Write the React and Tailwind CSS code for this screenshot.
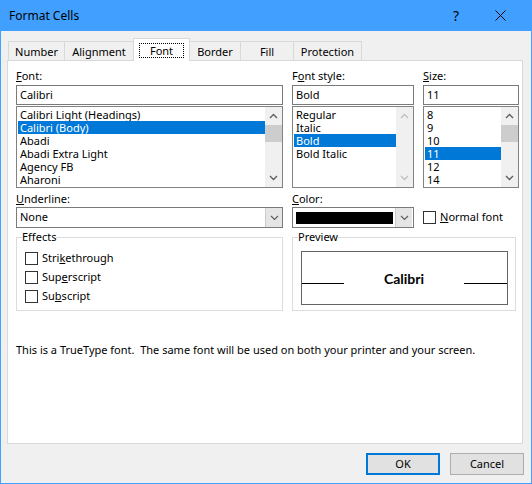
import { useState } from "react";

const tabs = [
  { name: "Number", w: "w-[57px]" },
  { name: "Alignment", w: "w-[70px]" },
  { name: "Font", w: "w-[57px]" },
  { name: "Border", w: "w-[52px]" },
  { name: "Fill", w: "w-[54px]" },
  { name: "Protection", w: "w-[69px]" },
];

const fonts = ["Calibri Light (Headings)", "Calibri (Body)", "Abadi", "Abadi Extra Light", "Agency FB", "Aharoni"];
const styles = ["Regular", "Italic", "Bold", "Bold Italic"];
const sizes = ["8", "9", "10", "11", "12", "14"];

function Chevron({ up, disabled }) {
  return (
    <svg width="9" height="6" viewBox="0 0 9 6" className="block">
      <path
        d={up ? "M1 5 L4.5 1.5 L8 5" : "M1 1 L4.5 4.5 L8 1"}
        fill="none"
        stroke={disabled ? "#c0c0c0" : "#606060"}
        strokeWidth="1.4"
      />
    </svg>
  );
}

function ListBox({ items, selected, width, disabled }) {
  return (
    <div className={`${width} h-[82px] mt-[1px] border border-[#828282] bg-white flex`}>
      <div className="flex-1 flex flex-col pt-[1px] pl-[1px]">
        {items.map((it) => (
          <div
            key={it}
            className={`h-[13px] leading-[13px] pl-[2px] whitespace-nowrap ${
              it === selected ? "bg-[#0078d7] text-white" : ""
            }`}
          >
            {it}
          </div>
        ))}
      </div>
      <div className="w-[17px] bg-[#f0f0f0] flex flex-col items-center justify-between py-[6px]">
        <Chevron up disabled={disabled} />
        <div className="flex-1 w-full">
          {!disabled && <div className="mt-[6px] h-[17px] w-full bg-[#cdcdcd]" />}
        </div>
        <Chevron disabled={disabled} />
      </div>
    </div>
  );
}

function Check({ children }) {
  return (
    <div className="h-[19px] flex items-center gap-[4px]">
      <div className="w-[13px] h-[13px] border border-[#333] bg-white" />
      <span>{children}</span>
    </div>
  );
}

function DropBtn() {
  return (
    <div className="w-[17px] h-[19px] bg-[#e5e5e5] border-l border-[#cccccc] flex items-center justify-center">
      <svg width="9" height="6" viewBox="0 0 9 6">
        <path d="M1 1 L4.5 4.5 L8 1" fill="none" stroke="#606060" strokeWidth="1.2" />
      </svg>
    </div>
  );
}

export default function App() {
  const [active] = useState("Font");

  return (
    <div className="w-[532px] h-[484px] flex flex-col bg-[#f0f0f0] border-x border-b border-[#42a0ff] font-['Segoe_UI','Noto_Sans',sans-serif] text-[11px] text-black overflow-hidden">
      {/* Title bar */}
      <div className="h-[31px] shrink-0 bg-[#41a0ff] flex items-center pl-[8px]">
        <span className="text-[12px] flex-1">Format Cells</span>
        <span className="text-[14px] mr-[36px]">?</span>
        <svg width="11" height="11" viewBox="0 0 11 11" className="mr-[25px]">
          <path d="M0.5 0.5 L10.5 10.5 M10.5 0.5 L0.5 10.5" stroke="#000" strokeWidth="1" />
        </svg>
      </div>

      <div className="flex-1 flex flex-col px-[6px] pt-[7px]">
        {/* Tabs */}
        <div className="flex items-end h-[22px] pl-[1px]">
          {tabs.map((t, i) =>
            t.name === active ? (
              <div
                key={t.name}
                className={`${t.w} h-[23px] -mb-[1px] -ml-[1px] relative z-10 bg-white border-x border-t border-[#d9d9d9] flex items-center justify-center`}
              >
                <span className="border border-dotted border-black px-[10px] leading-[13px]">{t.name}</span>
              </div>
            ) : (
              <div
                key={t.name}
                className={`${t.w} h-[19px] ${i ? "-ml-[1px]" : ""} border-x border-t border-[#d9d9d9] flex items-center justify-center pt-[2px]`}
              >
                {t.name}
              </div>
            )
          )}
        </div>

        {/* Panel */}
        <div className="h-[384px] w-[516px] bg-white border border-[#d9d9d9] flex flex-col pl-[8px] pt-[7px]">
          <div className="flex gap-[9px]">
            <div className="flex flex-col">
              <div className="h-[17px] leading-[15px]"><u>F</u>ont:</div>
              <div className="w-[267px] h-[20px] border border-[#7a7a7a] px-[3px] leading-[17px]">Calibri</div>
              <ListBox items={fonts} selected="Calibri (Body)" width="w-[267px]" />
            </div>
            <div className="flex flex-col">
              <div className="h-[17px] leading-[15px]">F<u>o</u>nt style:</div>
              <div className="w-[122px] h-[20px] border border-[#7a7a7a] px-[3px] leading-[17px]">Bold</div>
              <ListBox items={styles} selected="Bold" width="w-[122px]" disabled />
            </div>
            <div className="flex flex-col">
              <div className="h-[17px] leading-[15px]"><u>S</u>ize:</div>
              <div className="w-[96px] h-[20px] border border-[#7a7a7a] px-[3px] leading-[17px]">11</div>
              <ListBox items={sizes} selected="11" width="w-[96px]" />
            </div>
          </div>

          <div className="flex gap-[9px] mt-[4px]">
            <div className="flex flex-col">
              <div className="h-[15px] leading-[13px]"><u>U</u>nderline:</div>
              <div className="w-[267px] h-[21px] border border-[#7a7a7a] flex">
                <span className="flex-1 px-[3px] leading-[18px]">None</span>
                <DropBtn />
              </div>
            </div>
            <div className="flex flex-col">
              <div className="h-[15px] leading-[13px]"><u>C</u>olor:</div>
              <div className="w-[122px] h-[21px] border border-[#7a7a7a] flex items-center">
                <div className="w-[97px] h-[12px] bg-black ml-[3px] mr-[2px]" />
                <DropBtn />
              </div>
            </div>
            <div className="flex items-end pb-[1px]">
              <Check>
                <u>N</u>ormal font
              </Check>
            </div>
          </div>

          <div className="flex gap-[9px] mt-[2px]">
            <fieldset className="w-[267px] h-[81px] border border-[#dcdcdc]">
              <legend className="ml-[5px] leading-[14px]">Effects</legend>
              <div className="flex flex-col pl-[8px] pt-[5px]">
                <Check>Stri<u>k</u>ethrough</Check>
                <Check>Sup<u>e</u>rscript</Check>
                <Check>Su<u>b</u>script</Check>
              </div>
            </fieldset>
            <fieldset className="w-[224px] h-[81px] border border-[#dcdcdc]">
              <legend className="ml-[5px] leading-[14px]">Preview</legend>
              <div className="ml-[8px] mt-[7px] w-[207px] h-[54px] border border-[#646464] flex items-center">
                <div className="w-[42px] h-[1px] bg-black mt-[11px]" />
                <div className="flex-1 text-center font-['Lato','Carlito',sans-serif] font-bold text-[14px]">Calibri</div>
                <div className="w-[43px] h-[1px] bg-black mt-[11px]" />
              </div>
            </fieldset>
          </div>

          <div className="mt-[31px] leading-[15px]">
            This is a TrueType font.&nbsp; The same font will be used on both your printer and your screen.
          </div>
        </div>

        {/* Buttons */}
        <div className="flex justify-end gap-[10px] mt-[9px] pr-[1px]">
          <button className="w-[74px] h-[22px] bg-[#e1e1e1] border-2 border-[#0078d7]">OK</button>
          <button className="w-[74px] h-[22px] bg-[#e1e1e1] border border-[#adadad]">Cancel</button>
        </div>
      </div>
    </div>
  );
}
